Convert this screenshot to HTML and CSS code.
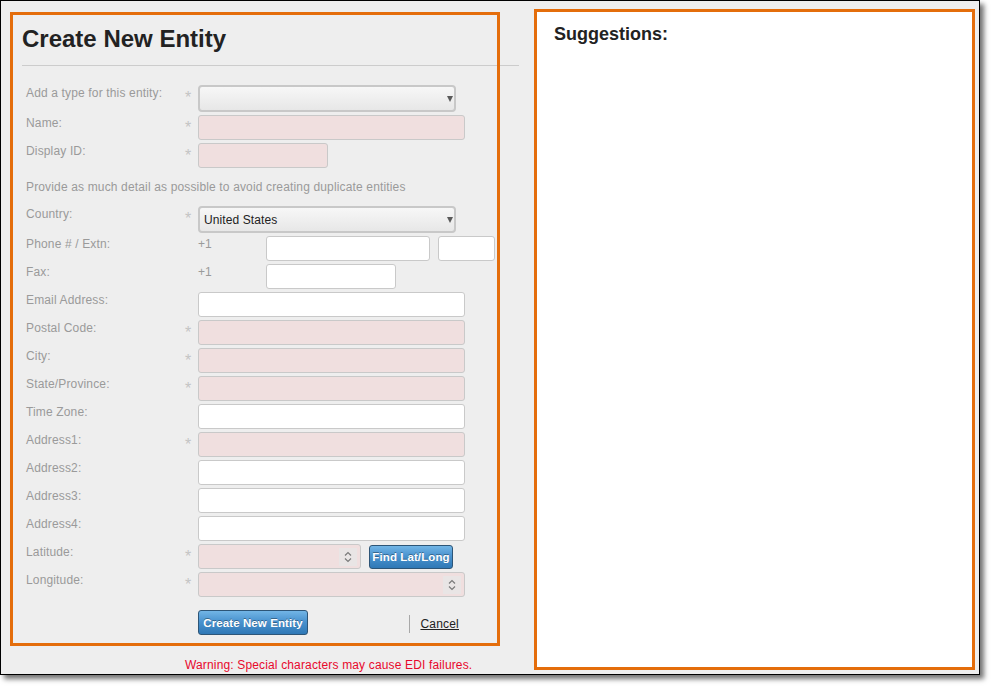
FILE: index.html
```html
<!DOCTYPE html>
<html>
<head>
<meta charset="utf-8">
<title>Create New Entity</title>
<link rel="stylesheet" href="styles.css">
</head>
<body>
<div class="frame">
  <div class="form-col">
    <div class="form-panel">
      <h1 class="title">Create New Entity</h1>
      <div class="rule"></div>
      <div class="fields">
        <div class="row">
          <span class="label">Add a type for this entity:</span><span class="req">*</span>
          <div class="ctl"><div class="select"><span class="select-text"></span><span class="caret"></span></div></div>
        </div>
        <div class="row">
          <span class="label">Name:</span><span class="req">*</span>
          <div class="ctl"><div class="inp pink w-full"></div></div>
        </div>
        <div class="row">
          <span class="label">Display ID:</span><span class="req">*</span>
          <div class="ctl"><div class="inp pink w-130"></div></div>
        </div>
        <p class="note">Provide as much detail as possible to avoid creating duplicate entities</p>
        <div class="row">
          <span class="label">Country:</span><span class="req">*</span>
          <div class="ctl"><div class="select"><span class="select-text">United States</span><span class="caret"></span></div></div>
        </div>
        <div class="row">
          <span class="label">Phone # / Extn:</span><span class="req"></span>
          <div class="ctl line"><span class="code">+1</span><div class="inp w-164"></div><div class="inp w-57"></div></div>
        </div>
        <div class="row">
          <span class="label">Fax:</span><span class="req"></span>
          <div class="ctl line"><span class="code">+1</span><div class="inp w-130"></div></div>
        </div>
        <div class="row">
          <span class="label">Email Address:</span><span class="req"></span>
          <div class="ctl"><div class="inp w-full"></div></div>
        </div>
        <div class="row">
          <span class="label">Postal Code:</span><span class="req">*</span>
          <div class="ctl"><div class="inp pink w-full"></div></div>
        </div>
        <div class="row">
          <span class="label">City:</span><span class="req">*</span>
          <div class="ctl"><div class="inp pink w-full"></div></div>
        </div>
        <div class="row">
          <span class="label">State/Province:</span><span class="req">*</span>
          <div class="ctl"><div class="inp pink w-full"></div></div>
        </div>
        <div class="row">
          <span class="label">Time Zone:</span><span class="req"></span>
          <div class="ctl"><div class="inp w-full"></div></div>
        </div>
        <div class="row">
          <span class="label">Address1:</span><span class="req">*</span>
          <div class="ctl"><div class="inp pink w-full"></div></div>
        </div>
        <div class="row">
          <span class="label">Address2:</span><span class="req"></span>
          <div class="ctl"><div class="inp w-full"></div></div>
        </div>
        <div class="row">
          <span class="label">Address3:</span><span class="req"></span>
          <div class="ctl"><div class="inp w-full"></div></div>
        </div>
        <div class="row">
          <span class="label">Address4:</span><span class="req"></span>
          <div class="ctl"><div class="inp w-full"></div></div>
        </div>
        <div class="row">
          <span class="label">Latitude:</span><span class="req">*</span>
          <div class="ctl line">
            <div class="inp pink num w-163">
              <svg class="spin" width="18" height="18" viewBox="0 0 18 18"><rect width="18" height="18" fill="#e9e5e5"/><path d="M6 7.5 L9 4.5 L12 7.5" fill="none" stroke="#7a7a7a" stroke-width="1.2"/><path d="M6 10.5 L9 13.5 L12 10.5" fill="none" stroke="#7a7a7a" stroke-width="1.2"/></svg>
            </div>
            <button class="btn btn-find">Find Lat/Long</button>
          </div>
        </div>
        <div class="row">
          <span class="label">Longitude:</span><span class="req">*</span>
          <div class="ctl">
            <div class="inp pink num w-full">
              <svg class="spin" width="18" height="18" viewBox="0 0 18 18"><rect width="18" height="18" fill="#e9e5e5"/><path d="M6 7.5 L9 4.5 L12 7.5" fill="none" stroke="#7a7a7a" stroke-width="1.2"/><path d="M6 10.5 L9 13.5 L12 10.5" fill="none" stroke="#7a7a7a" stroke-width="1.2"/></svg>
            </div>
          </div>
        </div>
        <div class="row">
          <span class="label"></span><span class="req"></span>
          <div class="ctl actions">
            <button class="btn btn-create">Create New Entity</button>
            <div class="cancel-group"><span class="divider"></span><a class="cancel" href="#">Cancel</a></div>
          </div>
        </div>
      </div>
    </div>
    <div class="warning">Warning: Special characters may cause EDI failures.</div>
  </div>
  <div class="suggest">
    <h2 class="suggest-title">Suggestions:</h2>
  </div>
</div>
</body>
</html>
```

FILE: styles.css
```css
* { box-sizing: border-box; }
html, body { margin: 0; padding: 0; background: #ffffff; }
body {
  min-height: 691px;
  font-family: "Liberation Sans", Arial, sans-serif;
  font-size: 12px;
  color: #222;
}
.frame {
  width: 980px;
  height: 675px;
  border: 1px solid #000;
  background: #eeeeee;
  display: flex;
  align-items: flex-start;
  padding: 8px 3px 3px 9px;
  box-shadow: 4px 4px 5px rgba(0, 0, 0, 0.55);
}
.form-col { width: 490px; flex: none; margin-top: 3px; }
.form-panel {
  position: relative;
  height: 634px;
  padding: 13px 0 0 12px;
}
.form-panel::after {
  content: "";
  position: absolute;
  inset: 0;
  border: 3px solid #e46d0b;
  pointer-events: none;
}
.title {
  margin: 0;
  font-size: 24px;
  line-height: 28px;
  font-weight: bold;
  color: #222;
}
.rule { height: 1px; background: #cccccc; margin: 12px -19px 0 0; }
.fields { margin-top: 19px; padding-left: 4px; }
.row {
  display: grid;
  grid-template-columns: 152px 20px auto;
  margin-bottom: 3px;
}
.label {
  padding-top: 1px;
  line-height: 14px;
  color: #9a9a9a;
  letter-spacing: 0.15px;
  white-space: nowrap;
}
.req {
  padding-top: 6px;
  font-size: 16px;
  line-height: 14px;
  color: #c4c4c4;
  text-align: center;
}
.ctl { display: flex; }
.ctl.line { gap: 8px; }
.code {
  width: 60px;
  padding-top: 1px;
  line-height: 14px;
  color: #9a9a9a;
}
.note {
  margin: 12px 0 12px;
  line-height: 14px;
  color: #9a9a9a;
  letter-spacing: 0.15px;
}
.inp {
  height: 25px;
  border: 1px solid #c9c9c9;
  border-radius: 3px;
  background: #ffffff;
}
.inp.pink { background: #f0dfdf; }
.inp.num { display: flex; align-items: center; justify-content: flex-end; padding-right: 3px; }
.w-full { width: 267px; }
.w-130 { width: 130px; }
.w-164 { width: 164px; }
.w-57 { width: 57px; }
.w-163 { width: 163px; }
.select {
  width: 258px;
  height: 27px;
  border: 2px solid #c8c8c8;
  border-radius: 4px;
  background: linear-gradient(#f7f7f7, #e7e7e7);
  display: flex;
  align-items: center;
  justify-content: space-between;
  padding: 0 1px 0 4px;
}
.select-text { color: #222; letter-spacing: 0.1px; }
.caret {
  width: 0;
  height: 0;
  border-left: 3.5px solid transparent;
  border-right: 3.5px solid transparent;
  border-top: 6px solid #5a5a5a;
  margin-top: 1px;
}
.spin { display: block; }
.btn {
  font-family: "Liberation Sans", Arial, sans-serif;
  font-weight: bold;
  font-size: 11.5px;
  color: #ffffff;
  padding: 0;
  border: 1px solid #2d5577;
  border-radius: 3px;
  background: linear-gradient(#72b5e6, #4a93cf 45%, #2f78b6);
  text-shadow: 0 -1px 0 rgba(0, 0, 0, 0.35);
  letter-spacing: 0.1px;
  cursor: pointer;
}
.btn-find { width: 84px; height: 24px; margin-top: 1px; }
.btn-create { width: 110px; height: 25px; }
.actions {
  width: 266px;
  margin-top: 10px;
  justify-content: space-between;
  align-items: center;
}
.cancel-group { display: flex; align-items: center; padding-right: 5px; padding-top: 3px; }
.divider { width: 1px; height: 18px; background: #a8a8a8; margin-right: 10px; }
.cancel { color: #222; text-decoration: underline; letter-spacing: 0.2px; }
.warning {
  margin-top: 12px;
  padding-left: 175px;
  line-height: 14px;
  color: #e8082c;
  letter-spacing: 0.15px;
  white-space: nowrap;
}
.suggest {
  width: 441px;
  height: 661px;
  margin-left: 34px;
  flex: none;
  background: #ffffff;
  border: 3px solid #e46d0b;
  padding: 11px 0 0 17px;
}
.suggest-title {
  margin: 0;
  font-size: 18px;
  line-height: 22px;
  font-weight: bold;
  color: #222;
}
```
